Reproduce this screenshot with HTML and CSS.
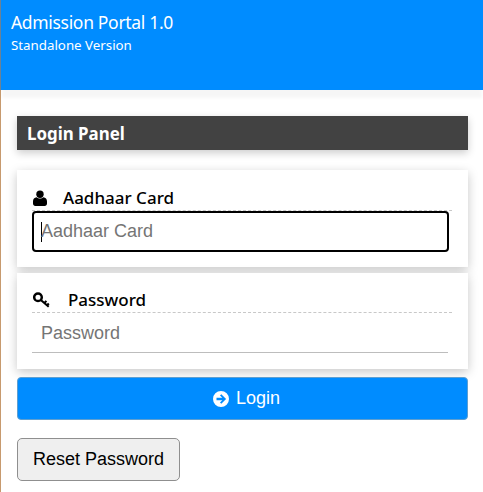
FILE: index.html
```html
<!DOCTYPE html>
<html lang="en">
<head>
<meta charset="utf-8">
<title>Admission Portal</title>
<link rel="stylesheet" href="styles.css">
</head>
<body>
<div class="page">
  <header class="topbar">
    <div class="brand">Admission Portal 1.0</div>
    <div class="edition">Standalone Version</div>
  </header>
  <main class="content">
    <h1 class="panel-title">Login Panel</h1>
    <section class="card card-first">
      <label class="field-label" for="aadhaar">
        <svg class="icon icon-user" viewBox="0 0 14 16" aria-hidden="true"><circle cx="7" cy="4.2" r="3.7"/><path d="M3.6 7.2C4.5 8 5.7 8.5 7 8.5s2.500-.5 3.400-1.300C12.600 7.400 14 9 14 11.500v2C14 15 13 16 11.700 16H2.300C1 16 0 15 0 13.500v-2C0 9 1.400 7.400 3.600 7.200z"/></svg>
        <span>Aadhaar Card</span>
      </label>
      <div class="fake-input focused" id="aadhaar"><i class="caret"></i><span class="placeholder">Aadhaar Card</span></div>
    </section>
    <section class="card card-second">
      <label class="field-label field-label-key" for="password">
        <svg class="icon icon-key" viewBox="0 0 17 16" aria-hidden="true"><circle cx="5" cy="5.200" r="3.800" fill="none" stroke="#000" stroke-width="2.500"/><path d="M7.800 8l7.900 6.700M11.400 11l2-2.100M14.100 13.300l1.700-1.800" fill="none" stroke="#000" stroke-width="2.100"/></svg>
        <span>Password</span>
      </label>
      <div class="fake-input fake-input-plain" id="password"><span class="placeholder">Password</span></div>
    </section>
    <button class="btn btn-login" type="button">
      <svg class="icon icon-arrow" viewBox="0 0 16 16" aria-hidden="true"><path fill-rule="evenodd" d="M8 0a8 8 0 1 1 0 16A8 8 0 0 1 8 0zM8.300 3.200L7 4.500 9.300 6.800H3.500v2.400h5.800L7 11.500l1.300 1.300L13.100 8z"/></svg>
      <span>Login</span>
    </button>
    <button class="btn btn-reset" type="button">Reset Password</button>
  </main>
</div>
</body>
</html>
```
FILE: styles.css
```css
* { box-sizing: border-box; }
html, body { margin: 0; padding: 0; background: #fff; }
body { height: 492px; overflow: hidden; font-family: "Noto Sans", "Open Sans", sans-serif; }
.page { height: 492px; border-left: 1px solid #c79a6e; }
.topbar {
  height: 90px;
  padding: 10px 10px 0;
  background: #008cff;
  color: #fff;
  box-shadow: -1px 0 0 #6a8296, 0 9px 3px -1px rgba(0, 0, 0, .035);
}
.brand { font-size: 17.500px; letter-spacing: -.32px; line-height: 25px; }
.edition { font-size: 13.300px; line-height: 18px; margin-top: 1px; }
.content { padding: 26px 15px 0 16px; }
.panel-title {
  margin: 0;
  height: 34px;
  padding-left: 10px;
  background: #424242;
  color: #fff;
  font-size: 16.900px;
  font-weight: 700;
  line-height: 36px;
  box-shadow: 0 3px 8px rgba(0, 0, 0, .2);
}
.card {
  padding: 15px 16px 0 15px;
  background: #fff;
  box-shadow: 0 3px 10px rgba(0, 0, 0, .22);
}
.card-first { height: 97px; margin-top: 20px; }
.card-second { height: 96px; margin-top: 6px; }
.field-label {
  display: flex;
  align-items: center;
  height: 26px;
  border-bottom: 1px dashed #c8c8c8;
  font-size: 17px;
  font-weight: 500;
  color: #000;
}
.field-label-key { height: 25px; padding-bottom: 2px; }
.icon { display: block; flex: none; }
.icon-user { width: 14px; height: 16px; margin-left: 1px; margin-right: 16px; }
.icon-key { width: 17px; height: 16px; margin-left: 1px; margin-right: 18px; margin-top: 2px; }
.fake-input {
  display: flex;
  align-items: center;
  height: 40px;
  margin-right: 4px;
  padding-left: 9px;
  font-family: "Liberation Sans", Arial, sans-serif;
  font-size: 18px;
  color: #757575;
  border-bottom: 1px solid #bdbdbd;
}
.fake-input-plain { padding-top: 2px; }
.fake-input.focused { height: 41px; margin-right: 3px; border: 2px solid #000; border-radius: 4px; padding-left: 7px; }
.caret { width: 1px; height: 20px; margin-right: -1px; background: #000; }
.btn { display: flex; align-items: center; justify-content: center; font-family: "Liberation Sans", Arial, sans-serif; font-size: 18px; cursor: pointer; }
.btn-login {
  width: 451px;
  height: 43px;
  margin-top: 8px;
  padding-left: 14px;
  gap: 7px;
  background: #008cff;
  border: 1px solid #5f9fd0;
  border-radius: 4px;
  color: #fff;
}
.icon-arrow { width: 16px; height: 16px; fill: #fff; }
.btn-reset {
  width: 163px;
  height: 43px;
  margin-top: 18px;
  background: #efefef;
  border: 1px solid #8f8f8f;
  border-radius: 5px;
  color: #000;
}
```
